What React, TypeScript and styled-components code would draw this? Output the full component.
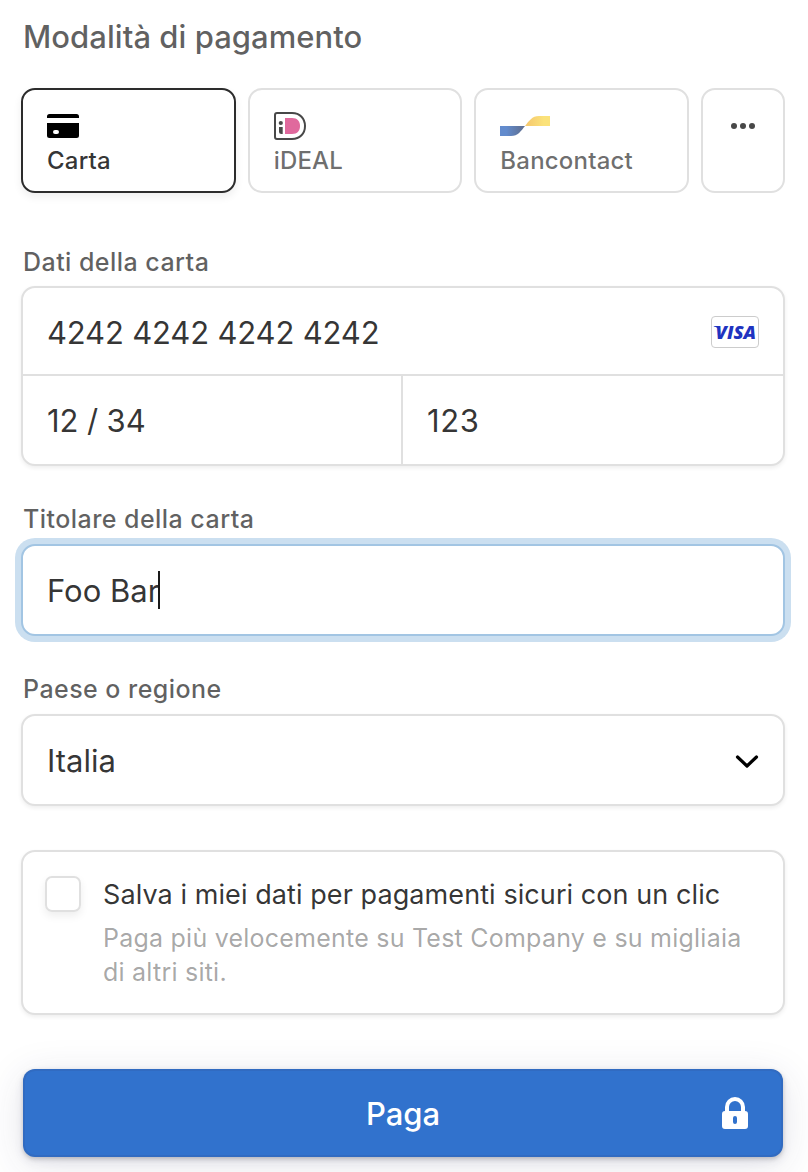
import React from "react";
import styled, { createGlobalStyle, css } from "styled-components";

const GlobalStyle = createGlobalStyle`
  * { box-sizing: border-box; }
  body {
    margin: 0;
    background: #fff;
    font-family: Inter, "Liberation Sans", sans-serif;
    -webkit-font-smoothing: antialiased;
  }
`;

const border = "#e0e0e0";
const ink = "rgba(26, 26, 26, 0.9)";

const Page = styled.main`
  display: flex;
  flex-direction: column;
  width: 808px;
  height: 1172px;
  padding: 17px 23px 0 21px;
  overflow: hidden;
  background: #fff;
`;

const Title = styled.h1`
  margin: 0 0 31px 2px;
  font-size: 31px;
  font-weight: 500;
  line-height: 40px;
  letter-spacing: 0.04px;
  color: rgba(26, 26, 26, 0.7);
  white-space: nowrap;
`;

const Tabs = styled.div`
  display: flex;
  gap: 12px;
  height: 105px;
`;

const Tab = styled.button<{ $active?: boolean }>`
  display: flex;
  flex: 1 1 0;
  flex-direction: column;
  padding: 20px 24px 0;
  border: 2px solid ${(p) => (p.$active ? "#2c2c2c" : border)};
  border-radius: 14px;
  background: #fff;
  box-shadow: ${(p) => (p.$active ? "0 4px 8px rgba(0,0,0,0.07)" : "none")};
  color: ${(p) => (p.$active ? ink : "rgba(26, 26, 26, 0.65)")};
  font: 500 24px/32px Inter, sans-serif;
  letter-spacing: 0.2px;
  text-align: left;
`;

const TabIcon = styled.span`
  display: flex;
  align-items: center;
  height: 32px;
  margin-bottom: 3px;
`;

const MoreTab = styled(Tab)`
  flex: 0 0 84px;
  padding: 20px 0 0;
  align-items: center;
`;

const Label = styled.label<{ $top: number; $bottom?: number }>`
  display: block;
  margin: ${(p) => p.$top}px 0 ${(p) => p.$bottom ?? 8}px 2px;
  font-size: 25px;
  font-weight: 500;
  line-height: 34px;
  letter-spacing: 0.45px;
  color: rgba(26, 26, 26, 0.7);
  white-space: nowrap;
`;

const panel = css`
  border: 2px solid ${border};
  border-radius: 14px;
  background: #fff;
  box-shadow: 0 2px 4px rgba(0, 0, 0, 0.07);
`;

const CardGroup = styled.div`
  ${panel}
  display: grid;
  grid-template-columns: 378px 1fr;
  grid-template-rows: 86px 90px;
  height: 180px;
`;

const fieldText = css`
  font-size: 31px;
  line-height: 38px;
  color: ${ink};
  white-space: pre;
`;

const Cell = styled.div<{ $wide?: boolean; $divided?: boolean; $spacing: number }>`
  ${fieldText}
  display: flex;
  align-items: center;
  justify-content: space-between;
  grid-column: ${(p) => (p.$wide ? "1 / -1" : "auto")};
  padding: ${(p) => (p.$wide ? 4 : 2)}px 24px 0;
  letter-spacing: ${(p) => p.$spacing}px;
  border-top: ${(p) => (p.$wide ? "0" : `2px solid ${border}`)};
  border-left: ${(p) => (p.$divided ? `2px solid ${border}` : "0")};
`;

const Field = styled.div<{ $focus?: boolean }>`
  ${panel}
  ${fieldText}
  display: flex;
  align-items: center;
  justify-content: space-between;
  flex: none;
  height: 92px;
  padding: 2px 24px 0;
  ${(p) =>
    p.$focus &&
    css`
      border-color: #a2c5e3;
      box-shadow: 0 0 0 6px #cbdff0;
    `}
`;

const Caret = styled.i`
  display: inline-block;
  width: 2px;
  height: 38px;
  margin: -1px 0 0 -1px;
  background: #1a1a1a;
  vertical-align: top;
`;

const VisaBadge = styled.span`
  display: flex;
  width: 48px;
  height: 32px;
  margin-top: -2px;
  border: 1px solid #ccc;
  border-radius: 4px;
  background: #fff;
`;

const SaveBox = styled.section`
  ${panel}
  display: flex;
  flex: none;
  height: 165px;
  margin-top: 44px;
  padding: 24px 22px 0;
`;

const Checkbox = styled.span`
  flex: none;
  width: 36px;
  height: 36px;
  margin-right: 22px;
  border: 2px solid ${border};
  border-radius: 7px;
  box-shadow: 0 4px 8px rgba(0, 0, 0, 0.07);
`;

const SaveTitle = styled.div`
  padding-top: 1px;
  font-size: 27px;
  line-height: 36px;
  letter-spacing: 0.08px;
  color: ${ink};
  white-space: nowrap;
`;

const SaveNote = styled.div`
  margin-top: 8px;
  font-size: 25px;
  line-height: 34px;
  letter-spacing: 0.23px;
  color: rgba(26, 26, 26, 0.4);
  white-space: nowrap;
`;

const PayButton = styled.button`
  display: grid;
  grid-template-columns: 1fr auto 1fr;
  align-items: center;
  flex: none;
  width: 760px;
  height: 88px;
  margin: 54px 0 0 2px;
  padding: 2px 34px 0;
  border: 0;
  border-radius: 12px;
  background: #3172cd;
  box-shadow: inset 0 0 0 2px rgba(50, 50, 93, 0.1), 0 4px 10px rgba(50, 50, 93, 0.1),
    0 2px 4px rgba(0, 0, 0, 0.17), 0 8px 40px rgba(50, 50, 93, 0.13);
  color: #fff;
  font: 500 31px/38px Inter, sans-serif;

  span { grid-column: 2; }
  svg { justify-self: end; margin-bottom: 2px; }
`;

const CardIcon = () => (
  <svg width="32" height="32" viewBox="0 0 32 32">
    <path d="M0 8V6.5A2.5 2.5 0 0 1 2.5 4h27A2.5 2.5 0 0 1 32 6.5V8Z" />
    <path
      fillRule="evenodd"
      d="M0 13H32V25.5A2.5 2.5 0 0 1 29.500 28H2.500A2.500 2.500 0 0 1 0 25.500ZM8 20a2 2 0 0 0 0 4h2a2 2 0 0 0 0-4Z"
    />
  </svg>
);

const IdealIcon = () => (
  <svg width="32" height="32" viewBox="0 0 32 32">
    <path
      d="M3 3H18C26 3 31 8.500 31 16S26 29 18 29H3Q1 29 1 27V5Q1 3 3 3Z"
      fill="#fff"
      stroke="#484848"
      strokeWidth="2"
    />
    <circle cx="6.800" cy="13" r="2.100" fill="#484848" />
    <path d="M5 17H8.700V24H7.500Q5 24 5 21.500Z" fill="#484848" />
    <path d="M11 8H18C23.500 8 26 11.500 26 16S23.500 24 18 24H11Z" fill="#e0699d" />
  </svg>
);

const BancontactIcon = () => (
  <svg width="50" height="32" viewBox="0 0 50 32">
    <defs>
      <linearGradient id="blue" x1="0" x2="1">
        <stop offset="0.250" stopColor="#628bcd" />
        <stop offset="1" stopColor="#5e6c8c" />
      </linearGradient>
      <linearGradient id="yellow" x1="0" x2="1">
        <stop offset="0.050" stopColor="#f5c86e" />
        <stop offset="0.750" stopColor="#fbe27a" />
      </linearGradient>
    </defs>
    <path d="M0 16H25C21 21 18 26 11 26H0Z" fill="url(#blue)" />
    <path d="M25 16C29 11 32 6 39 6H50V16Z" fill="url(#yellow)" />
  </svg>
);

const Visa = () => (
  <svg width="46" height="30" viewBox="0 0 46 30">
    <path d="M1.800 9H6.800L8 14Q6 10.400 1.800 9.600Z" fill="#2033c0" />
    <text
      x="3.600"
      y="22"
      textLength="40.500"
      lengthAdjust="spacingAndGlyphs"
      fontFamily="'Open Sans', sans-serif"
      fontStyle="italic"
      fontWeight="800"
      fontSize="18"
      letterSpacing="0"
      fill="#2033c0"
    >
      VISA
    </text>
  </svg>
);

const LockIcon = () => (
  <svg width="28" height="34" viewBox="0 0 28 34">
    <path d="M6 17V11a8 8 0 0 1 16 0V17" fill="none" stroke="#fff" strokeWidth="4" />
    <path
      fill="#fff"
      fillRule="evenodd"
      d="M4 15H24a3 3 0 0 1 3 3V30a3 3 0 0 1-3 3H4a3 3 0 0 1-3-3V18a3 3 0 0 1 3-3ZM14 20a2 2 0 0 0-2 2V26a2 2 0 0 0 4 0V22a2 2 0 0 0-2-2Z"
    />
  </svg>
);

export default function App() {
  return (
    <>
      <GlobalStyle />
      <Page>
        <Title>Modalità di pagamento</Title>
        <Tabs>
          <Tab $active>
            <TabIcon><CardIcon /></TabIcon>
            Carta
          </Tab>
          <Tab>
            <TabIcon><IdealIcon /></TabIcon>
            iDEAL
          </Tab>
          <Tab>
            <TabIcon><BancontactIcon /></TabIcon>
            Bancontact
          </Tab>
          <MoreTab aria-label="Altri metodi">
            <svg width="24" height="32" viewBox="0 0 24 32" fill="#484848">
              <circle cx="3" cy="16" r="3" />
              <circle cx="12" cy="16" r="3" />
              <circle cx="21" cy="16" r="3" />
            </svg>
          </MoreTab>
        </Tabs>

        <Label $top={52} $bottom={7}>Dati della carta</Label>
        <CardGroup>
          <Cell $wide $spacing={-0.17}>
            4242 4242 4242 4242
            <VisaBadge><Visa /></VisaBadge>
          </Cell>
          <Cell $spacing={-0.1}>12 / 34</Cell>
          <Cell $divided $spacing={0.6}>123</Cell>
        </CardGroup>

        <Label $top={36}>Titolare della carta</Label>
        <Field $focus>
          <span>Foo Bar<Caret /></span>
        </Field>

        <Label $top={36}>Paese o regione</Label>
        <Field>
          Italia
          <svg width="24" height="24" viewBox="0 0 24 24" fill="none" stroke="#000" strokeWidth="3.200" strokeLinecap="round" strokeLinejoin="round">
            <path d="M2.500 8L12 17L21.500 8" />
          </svg>
        </Field>

        <SaveBox>
          <Checkbox />
          <div>
            <SaveTitle>Salva i miei dati per pagamenti sicuri con un clic</SaveTitle>
            <SaveNote>
              Paga più velocemente su Test Company e su migliaia
              <br />
              di altri siti.
            </SaveNote>
          </div>
        </SaveBox>

        <PayButton>
          <span>Paga</span>
          <LockIcon />
        </PayButton>
      </Page>
    </>
  );
}
